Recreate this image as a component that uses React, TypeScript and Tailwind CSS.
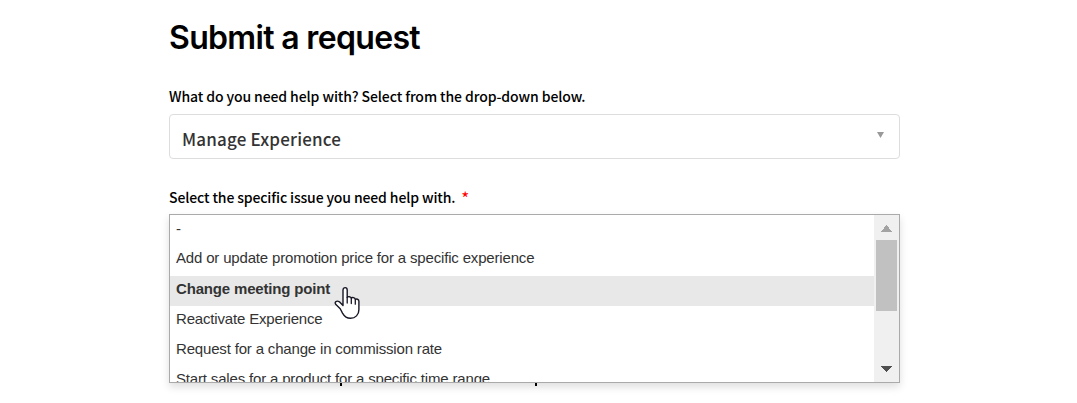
const options = [
  { label: '-', row: 'h-[28px]' },
  { label: 'Add or update promotion price for a specific experience', row: 'h-[33px] pb-[3px]' },
  { label: 'Change meeting point', row: 'h-[30px] pb-[3px] bg-[#e8e8e8] font-bold' },
  { label: 'Reactivate Experience', row: 'h-[30px] pb-[4px]' },
  { label: 'Request for a change in commission rate', row: 'h-[30px] pb-[4px]' },
  { label: 'Start sales for a product for a specific time range', row: 'h-[30px] pb-[3px]' },
];

function Pointer() {
  return (
    <svg className="absolute left-[165px] top-[72px]" width="27" height="34" viewBox="0 0 27 34">
      <path
        d="M9 19.500V3.900c0-3 4.200-3 4.200 0v7.600c.5-1.300 3.800-1.100 4.100.7c.8-1.100 3.700-.7 4 1.200c1-.8 3.600-.2 3.600 1.900v8.400c0 5-3.500 8.600-8.400 8.600c-3.700 0-6.200-2-8-5.200L6.200 22.700L1.700 18.300c-1.700-2.300 1.100-4.200 3.700-2.500z"
        fill="#fff"
        stroke="#171725"
        strokeWidth="1.400"
        strokeLinejoin="round"
      />
      <path d="M13.200 11.500v5.600M17.300 12.500v5.100M21.300 14v4.200" fill="none" stroke="#171725" strokeWidth="1.300" strokeLinecap="round" />
    </svg>
  );
}

function Scrollbar() {
  return (
    <div className="flex w-[25px] shrink-0 flex-col items-center bg-[#f0f0f0]">
      <svg className="h-[25px] w-[21px]" viewBox="0 0 21 25" shapeRendering="crispEdges">
        <path d="M5 16.500L10.500 10L16 16.500Z" fill="#a3a3a3" />
      </svg>
      <div className="h-[71px] w-[21px] bg-[#c1c1c1]" />
      <div className="flex-1" />
      <svg className="h-[25px] w-[21px]" viewBox="0 0 21 25" shapeRendering="crispEdges">
        <path d="M4.500 8.500L10.500 15L16.500 8.500Z" fill="#505050" />
      </svg>
    </div>
  );
}

export default function App() {
  return (
    <main className="h-[403px] overflow-hidden bg-white pl-[169px] text-black">
      <h1 className="flex h-[76px] items-center whitespace-nowrap font-['Inter',sans-serif] text-[32px] font-semibold tracking-[-0.67px]">
        Submit a request
      </h1>
      <div className="flex h-[38px] items-center pt-[2px] font-['Noto_Sans_CJK_JP',sans-serif] text-[14px] font-medium tracking-[-0.1px]">
        <span className="whitespace-nowrap">What do you need help with? Select from the drop-down below.</span>
      </div>
      <div className="flex h-[45px] w-[731px] items-center justify-between rounded-[4px] border border-[#dddddd] pl-3 pr-[15px] font-['Noto_Sans_CJK_JP',sans-serif] text-[17px] font-medium tracking-[0.18px] text-[#333]">
        <span className="pt-[4px]">Manage Experience</span>
        <svg className="mb-[4px] h-[6px] w-[7px]" viewBox="0 0 7 6">
          <path d="M0 0H7L3.500 6Z" fill="#999" />
        </svg>
      </div>
      <div className="flex h-[55px] items-end pb-[6px] font-['Noto_Sans_CJK_JP',sans-serif] text-[14px] font-medium tracking-[-0.13px]">
        <span className="whitespace-nowrap">Select the specific issue you need help with.</span>
        <span className="ml-[6px] text-[17px] font-normal leading-[20px] text-[#f00]">*</span>
      </div>
      <div className="relative h-[169px] w-[731px]">
        <div className="flex h-[169px] overflow-hidden border border-[#aaa] bg-white shadow-[0_4px_8px_rgba(0,0,0,0.13)]">
          <div className="min-w-0 flex-1 font-['Liberation_Sans',sans-serif] text-[15px] tracking-[-0.17px] text-[#333]">
            {options.map(({ label, row }) => (
              <div key={label} className={`flex items-center whitespace-nowrap pl-[6px] ${row}`}>
                {label}
              </div>
            ))}
          </div>
          <Scrollbar />
        </div>
        <Pointer />
        <span className="absolute left-[171px] top-[169px] h-[3px] w-[2px] bg-black" />
        <span className="absolute left-[366px] top-[169px] h-[3px] w-[2px] bg-black" />
      </div>
    </main>
  );
}
